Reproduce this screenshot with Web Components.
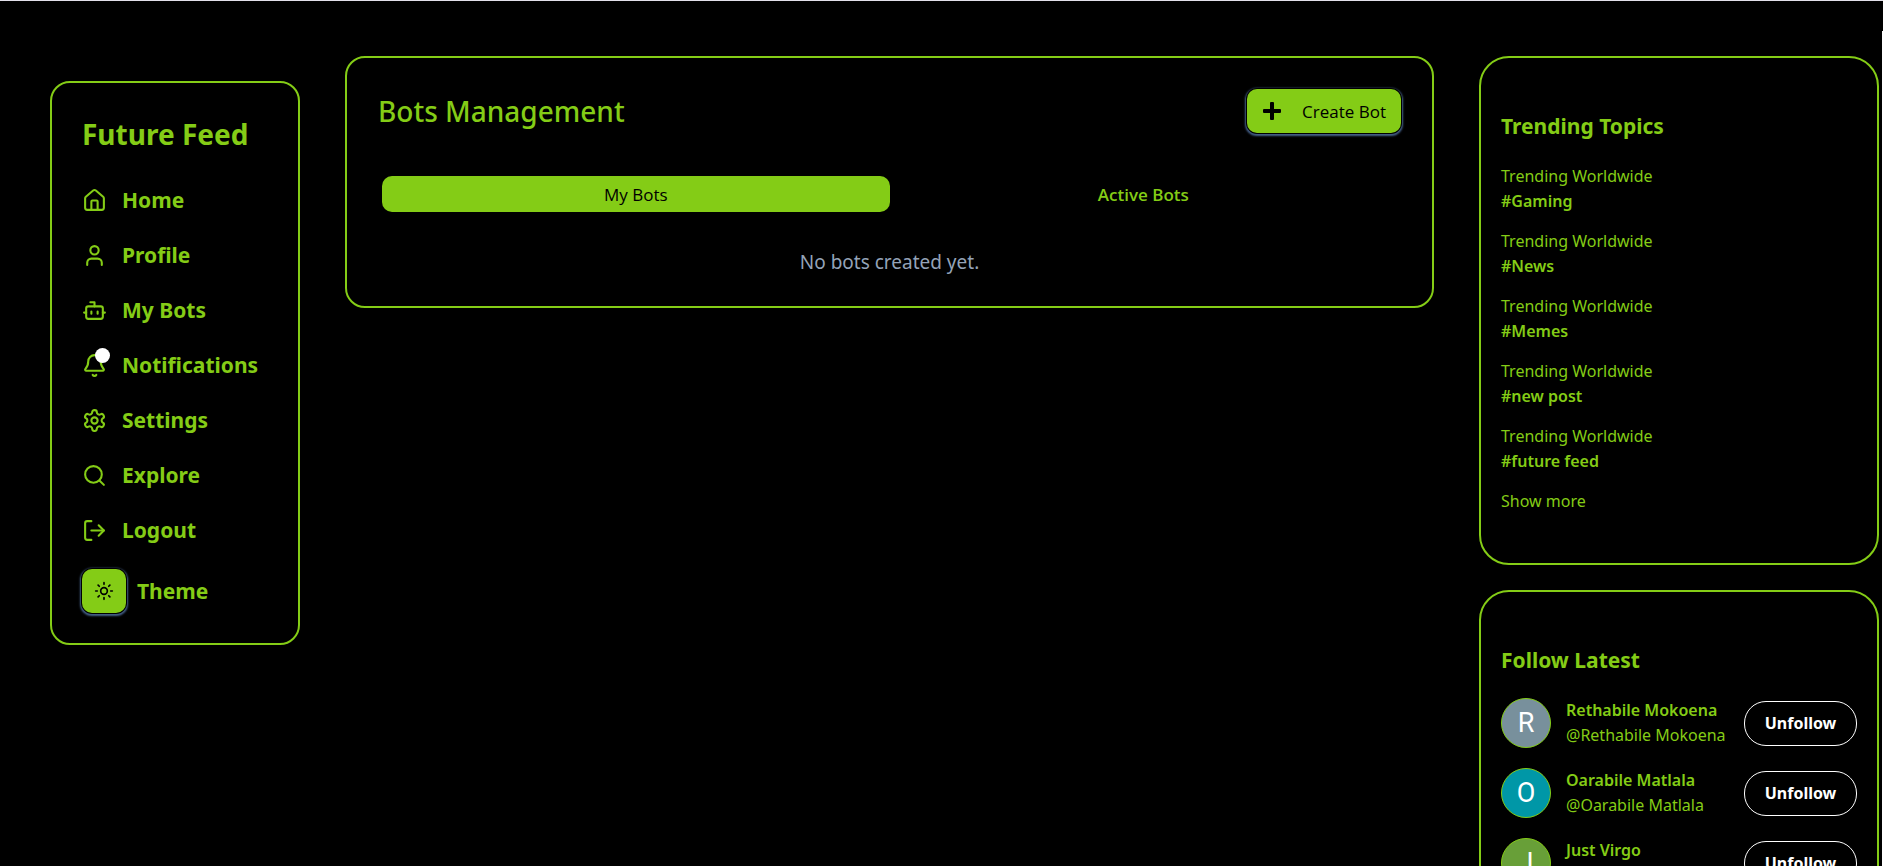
<!DOCTYPE html>
<html lang="en">
<head>
<meta charset="utf-8">
<title>Future Feed – Bots Management</title>
<style>
  html, body { margin: 0; background: #000; }
  body {
    --lime: #84cc16;
    --ring: 0 0 0 1px #000, 0 1px 2px 2px #45618a;
    color: var(--lime);
    font: 400 16px/25px "Noto Sans", "Open Sans", sans-serif;
  }
</style>
</head>
<body>
<feed-app>
  <side-nav slot="nav"></side-nav>
  <bots-panel slot="main"></bots-panel>
  <side-card slot="aside" heading="Trending Topics">
    <trend-item tag="#Gaming"></trend-item>
    <trend-item tag="#News"></trend-item>
    <trend-item tag="#Memes"></trend-item>
    <trend-item tag="#new post"></trend-item>
    <trend-item tag="#future feed"></trend-item>
    <show-more></show-more>
  </side-card>
  <side-card slot="aside" heading="Follow Latest">
    <follow-item name="Rethabile Mokoena" tint="#78909c"></follow-item>
    <follow-item name="Oarabile Matlala" tint="#0097a7"></follow-item>
    <follow-item name="Just Virgo" tint="#689f38"></follow-item>
  </side-card>
</feed-app>

<script>
const ICONS = {
  home: '<path d="M15 21v-8a1 1 0 0 0-1-1h-4a1 1 0 0 0-1 1v8"/><path d="M3 10a2 2 0 0 1 .709-1.528l7-5.999a2 2 0 0 1 2.582 0l7 5.999A2 2 0 0 1 21 10v9a2 2 0 0 1-2 2H5a2 2 0 0 1-2-2z"/>',
  user: '<path d="M19 21v-2a4 4 0 0 0-4-4H9a4 4 0 0 0-4 4v2"/><circle cx="12" cy="7" r="4"/>',
  bot: '<path d="M12 8V4H8"/><rect width="16" height="12" x="4" y="8" rx="2"/><path d="M2 14h2M20 14h2M15 13v2M9 13v2"/>',
  bell: '<path d="M10.268 21a2 2 0 0 0 3.464 0"/><path d="M3.262 15.326A1 1 0 0 0 4 17h16a1 1 0 0 0 .74-1.673C19.41 13.956 18 12.499 18 8A6 6 0 0 0 6 8c0 4.499-1.411 5.956-2.738 7.326"/>',
  settings: '<path d="M12.22 2h-.44a2 2 0 0 0-2 2v.18a2 2 0 0 1-1 1.73l-.43.25a2 2 0 0 1-2 0l-.15-.08a2 2 0 0 0-2.73.73l-.22.38a2 2 0 0 0 .73 2.73l.15.1a2 2 0 0 1 1 1.72v.51a2 2 0 0 1-1 1.74l-.15.09a2 2 0 0 0-.73 2.73l.22.38a2 2 0 0 0 2.73.73l.15-.08a2 2 0 0 1 2 0l.43.25a2 2 0 0 1 1 1.73V20a2 2 0 0 0 2 2h.44a2 2 0 0 0 2-2v-.18a2 2 0 0 1 1-1.73l.43-.25a2 2 0 0 1 2 0l.15.08a2 2 0 0 0 2.73-.73l.22-.39a2 2 0 0 0-.73-2.73l-.15-.08a2 2 0 0 1-1-1.74v-.5a2 2 0 0 1 1-1.74l.15-.09a2 2 0 0 0 .73-2.73l-.22-.38a2 2 0 0 0-2.73-.73l-.15.08a2 2 0 0 1-2 0l-.43-.25a2 2 0 0 1-1-1.73V4a2 2 0 0 0-2-2z"/><circle cx="12" cy="12" r="3"/>',
  search: '<circle cx="11" cy="11" r="8"/><path d="m21 21-4.3-4.3"/>',
  logout: '<path d="M9 21H5a2 2 0 0 1-2-2V5a2 2 0 0 1 2-2h4"/><path d="m16 17 5-5-5-5"/><path d="M21 12H9"/>',
  sun: '<circle cx="12" cy="12" r="4"/><path d="M12 2v2M12 20v2M4.93 4.93l1.41 1.41M17.66 17.66l1.41 1.41M2 12h2M20 12h2M6.34 17.66l-1.41 1.41M19.07 4.93l-1.41 1.41"/>'
};
const icon = name => `<svg viewBox="0 0 24 24" fill="none" stroke="currentColor" stroke-width="2" stroke-linecap="round" stroke-linejoin="round" aria-hidden="true">${ICONS[name]}</svg>`;

function define(tag, render) {
  customElements.define(tag, class extends HTMLElement {
    connectedCallback() {
      if (this.shadowRoot) return;
      this.attachShadow({ mode: 'open' }).innerHTML =
        '<style>*{box-sizing:border-box;margin:0}button{font:inherit;cursor:pointer}a{color:inherit;text-decoration:none}</style>' + render(this);
    }
  });
}

define('feed-app', () => `
<style>
  :host { display: block; position: relative; height: 100vh; overflow: hidden; box-sizing: border-box; border-top: 1px solid #e2e0ea; }
  :host::after { content: ""; position: absolute; top: 30px; right: 0; bottom: 0; width: 1px; background: #fff; }
  .layout { display: grid; grid-template-columns: 250px minmax(0, 1fr) 400px; column-gap: 45px; align-items: start; padding: 55px 4px 0 50px; }
  nav { padding-top: 25px; }
  aside { display: grid; gap: 25px; }
</style>
<div class="layout">
  <nav aria-label="Main"><slot name="nav"></slot></nav>
  <main><slot name="main"></slot></main>
  <aside><slot name="aside"></slot></aside>
</div>`);

define('side-nav', () => `
<style>
  :host { display: block; box-sizing: border-box; border: 2px solid var(--lime); border-radius: 20px; padding: 30px; font-weight: 700; font-size: 21px; }
  h1 { font-size: 28px; line-height: 42px; margin-bottom: 18px; }
  .theme { display: flex; align-items: center; gap: 11px; margin-top: 11px; }
  button { display: grid; place-items: center; width: 44px; height: 44px; padding: 0; border: 0; border-radius: 10px; background: var(--lime); color: #000; box-shadow: var(--ring); }
  button svg { width: 20px; height: 20px; }
</style>
<h1>Future Feed</h1>
<nav-link icon="home">Home</nav-link>
<nav-link icon="user">Profile</nav-link>
<nav-link icon="bot">My Bots</nav-link>
<nav-link icon="bell" badge>Notifications</nav-link>
<nav-link icon="settings">Settings</nav-link>
<nav-link icon="search">Explore</nav-link>
<nav-link icon="logout">Logout</nav-link>
<div class="theme"><button type="button" aria-labelledby="t">${icon('sun')}</button><span id="t">Theme</span></div>`);

define('nav-link', el => `
<style>
  :host { display: block; }
  a { display: flex; align-items: center; gap: 15px; height: 55px; }
  .icon { position: relative; display: flex; }
  svg { width: 25px; height: 25px; }
  .badge { position: absolute; top: -5px; right: -3px; width: 15px; height: 15px; border-radius: 50%; background: #fff; }
</style>
<a href="#"><span class="icon">${icon(el.getAttribute('icon'))}${el.hasAttribute('badge') ? '<span class="badge"></span>' : ''}</span><slot></slot></a>`);

define('bots-panel', () => `
<style>
  :host { display: block; box-sizing: border-box; border: 2px solid var(--lime); border-radius: 20px; padding: 31px 31px 30px; }
  header { display: flex; align-items: center; justify-content: space-between; margin-bottom: 39px; }
  h2 { font-size: 28px; line-height: 44px; font-weight: 500; }
  .create, .tab { font: 500 17px/25px "Open Sans", sans-serif; border: 0; border-radius: 10px; }
  .create { display: flex; align-items: center; gap: 20px; height: 44px; padding: 0 15px; background: var(--lime); color: #000; box-shadow: var(--ring); }
  .create svg { width: 20px; height: 20px; }
  .tabs { display: grid; grid-template-columns: 1fr 1fr; padding: 4px; margin-bottom: 32px; }
  .tab { height: 36px; padding: 0; background: none; color: var(--lime); font-weight: 600; }
  .tab[aria-selected="true"] { background: var(--lime); color: #000; font-weight: 500; }
  p { font-size: 19px; line-height: 28px; text-align: center; color: #94a3b8; }
</style>
<header>
  <h2>Bots Management</h2>
  <button class="create" type="button"><svg viewBox="0 0 20 20" fill="currentColor" aria-hidden="true"><path d="M9 1h2q1 0 1 1v6h6q1 0 1 1v2q0 1-1 1h-6v6q0 1-1 1H9q-1 0-1-1v-6H2q-1 0-1-1V9q0-1 1-1h6V2q0-1 1-1z"/></svg>Create Bot</button>
</header>
<div class="tabs" role="tablist">
  <button class="tab" type="button" role="tab" aria-selected="true">My Bots</button>
  <button class="tab" type="button" role="tab" aria-selected="false">Active Bots</button>
</div>
<p>No bots created yet.</p>`);

define('side-card', el => `
<style>
  :host { display: block; box-sizing: border-box; border: 2px solid var(--lime); border-radius: 30px; padding: 54px 20px 49px; }
  h2 { font-size: 21px; line-height: 28px; font-weight: 700; margin-bottom: 24px; }
</style>
<h2>${el.getAttribute('heading')}</h2>
<slot></slot>`);

define('trend-item', el => `
<style>
  :host { display: block; margin-bottom: 15px; }
  .tag { font-weight: 600; }
</style>
<p>Trending Worldwide</p>
<p class="tag">${el.getAttribute('tag')}</p>`);

define('show-more', () => `
<style>
  :host { display: block; }
  button { display: block; padding: 0; border: 0; background: none; color: inherit; }
</style>
<button type="button">Show more</button>`);

define('follow-item', el => {
  const name = el.getAttribute('name');
  return `
<style>
  :host { display: flex; align-items: center; height: 50px; margin-bottom: 20px; white-space: nowrap; }
  .avatar { display: grid; place-items: center; flex: none; width: 50px; height: 50px; margin-right: 15px; border: 1px solid var(--lime); border-radius: 50%; background: ${el.getAttribute('tint')}; color: #fff; font: 400 27px/48px Roboto, sans-serif; }
  .who { flex: 1; min-width: 0; }
  .name { font-weight: 600; }
  button { flex: none; width: 113px; height: 45px; padding: 0; border: 1px solid #fff; border-radius: 22px; background: none; color: #fff; font-weight: 700; }
</style>
<span class="avatar">${name[0]}</span>
<div class="who"><p class="name">${name}</p><p>@${name}</p></div>
<button type="button">Unfollow</button>`;
});
</script>
</body>
</html>
